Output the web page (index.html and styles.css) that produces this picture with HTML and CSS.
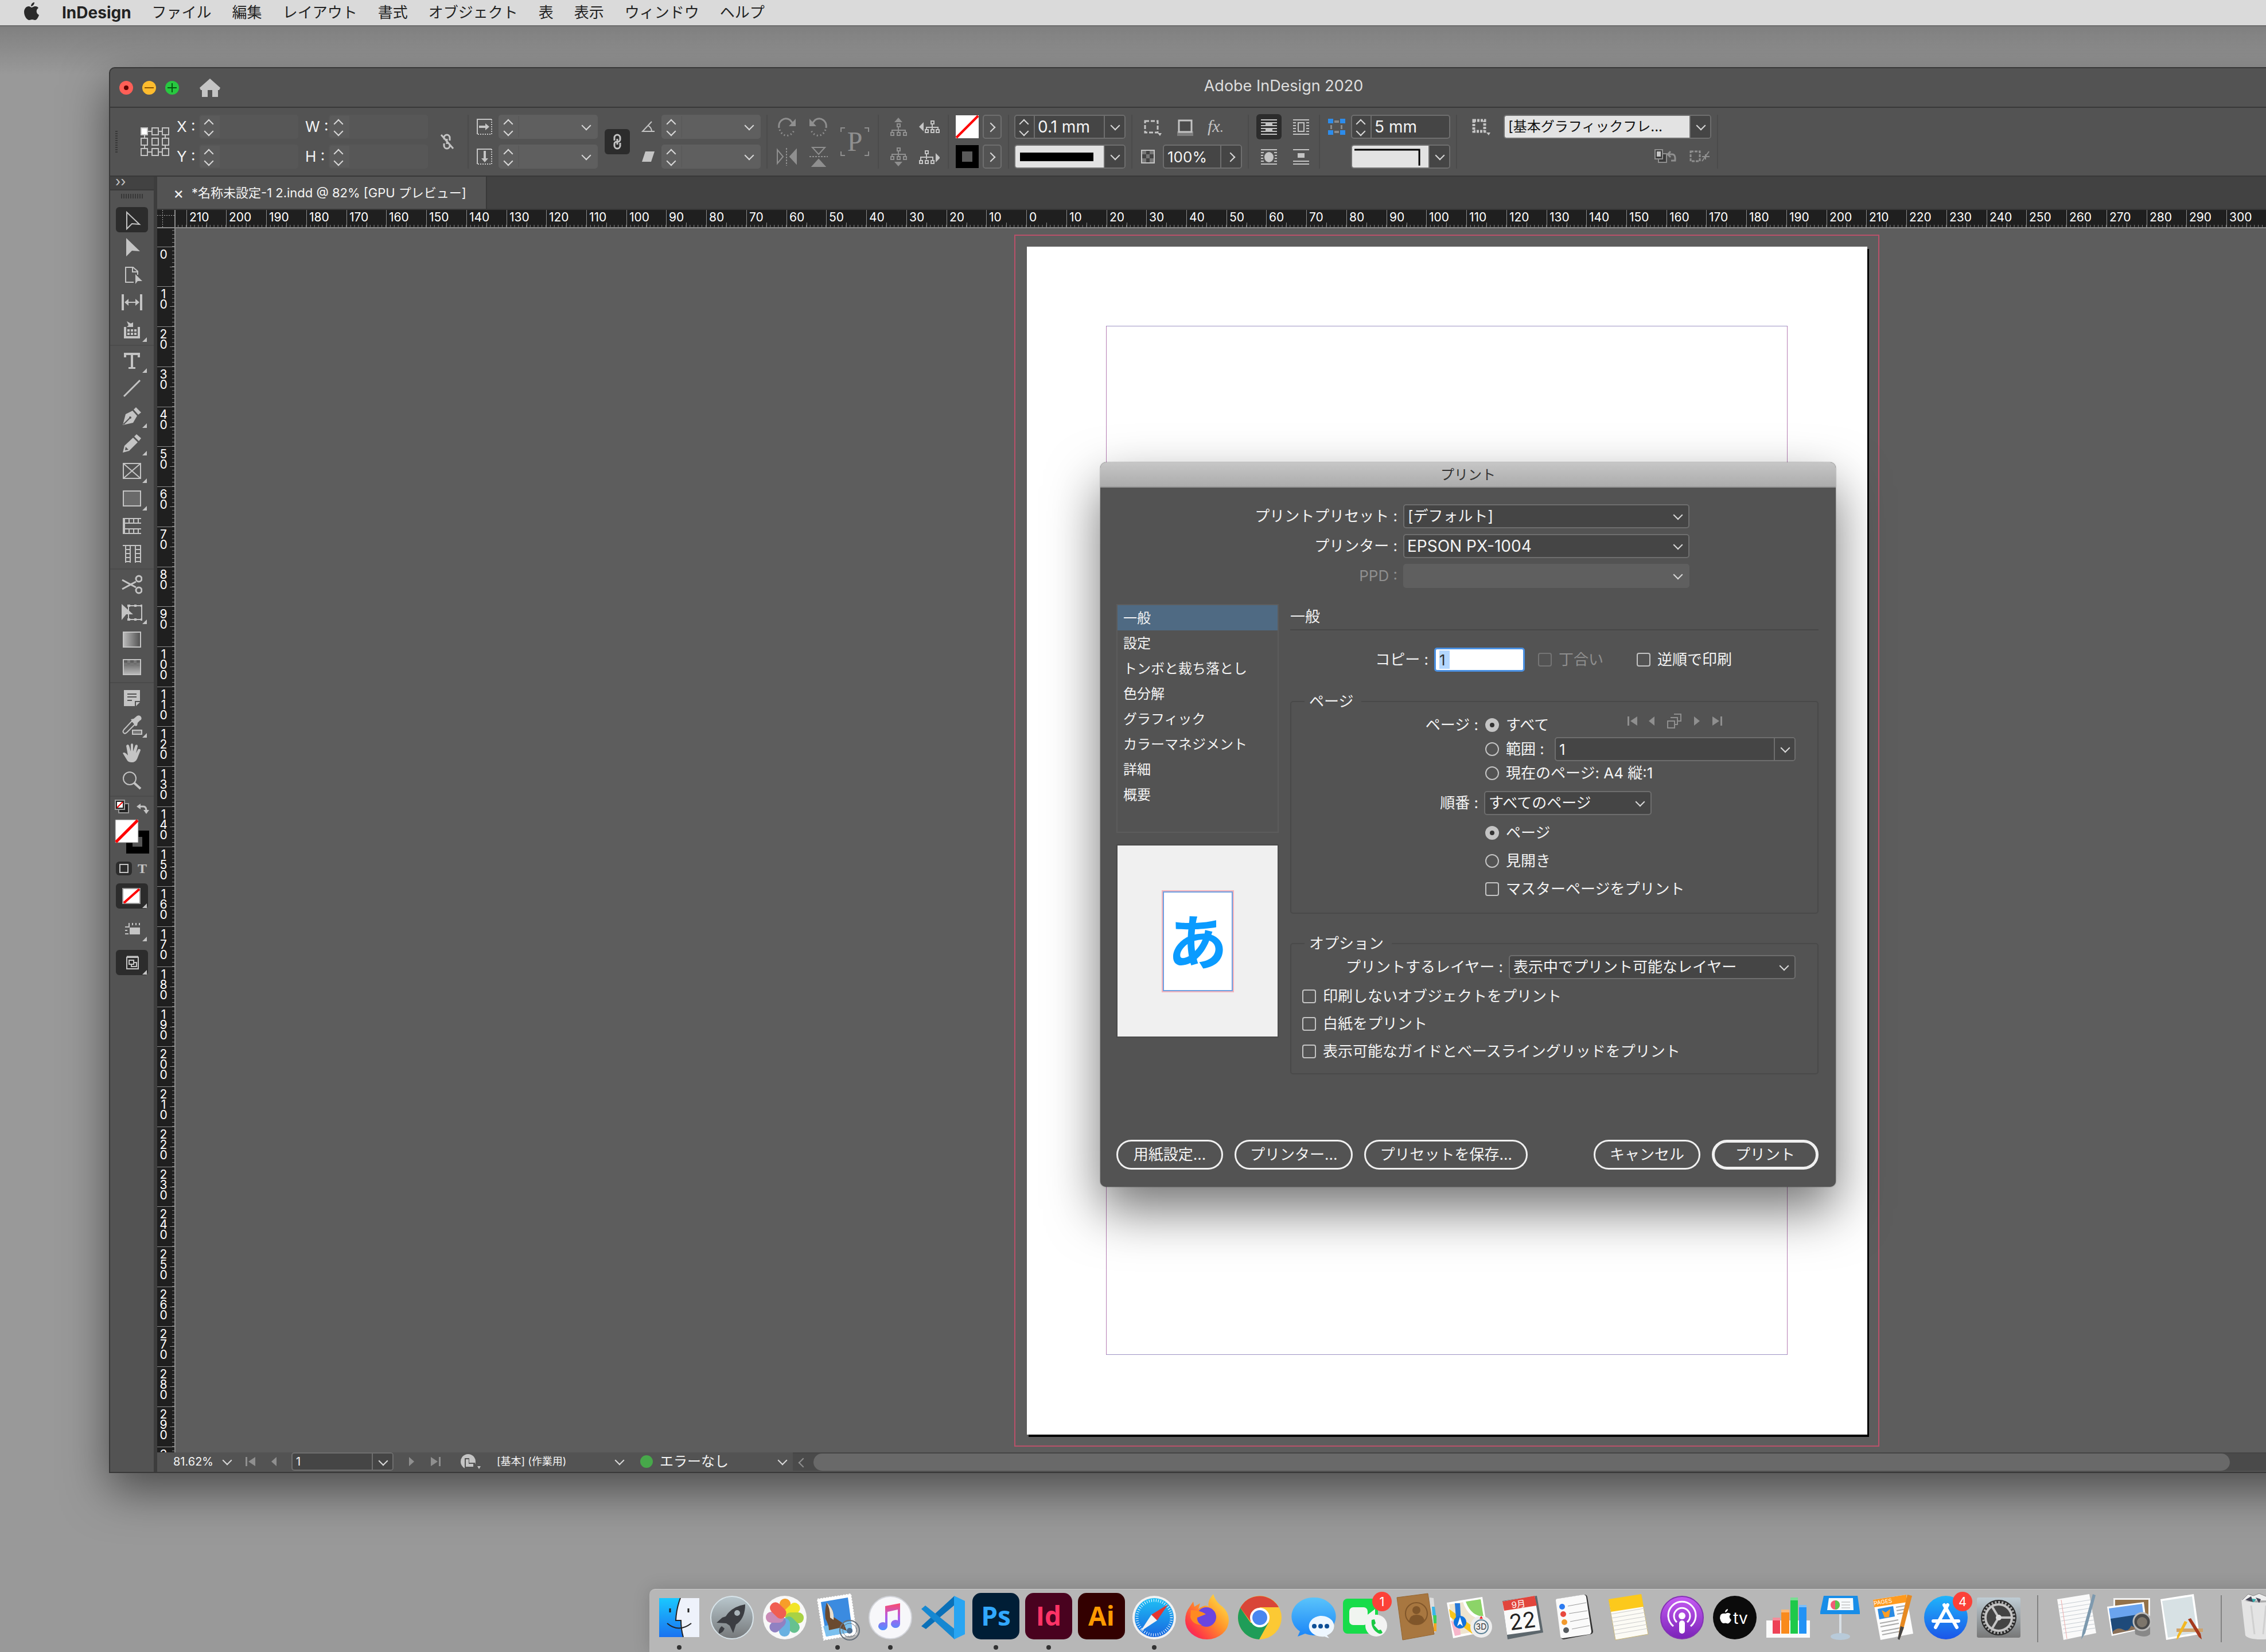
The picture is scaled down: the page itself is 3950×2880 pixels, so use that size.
FILE: index.html
```html
<!DOCTYPE html>
<html lang="ja">
<head>
    <meta charset="UTF-8">
    <meta name="viewport" content="width=device-width, initial-scale=1.0">
    <title>Adobe InDesign 2020</title>
    <link rel="stylesheet" href="styles.css">
</head>
<body>
    <nav class="menubar">
        <svg class="apple" viewBox="0 0 26 32"><path d="M18 0c0 4-3 7-6 7 0-4 3-7 6-7zM13 9c2 0 3-2 7-2 2 0 4 1 5 3-5 3-4 10 1 12-1 4-4 9-7 9-2 0-3-1-5-1s-3 1-5 1C5 31 0 24 0 17 0 11 4 7 8 7c2 0 4 2 5 2z" fill="#2a2a2a"/></svg>
        <a href="#" class="app-name">InDesign</a>
        <a href="#">ファイル</a>
        <a href="#">編集</a>
        <a href="#">レイアウト</a>
        <a href="#">書式</a>
        <a href="#">オブジェクト</a>
        <a href="#">表</a>
        <a href="#">表示</a>
        <a href="#">ウィンドウ</a>
        <a href="#">ヘルプ</a>
    </nav>

    <main class="window">
        <header class="titlebar">
            <div class="lights">
                <svg viewBox="0 0 24 24"><circle cx="12" cy="12" r="12" fill="#ff5f57"/><circle cx="12" cy="12" r="4" fill="#5c0400"/></svg>
                <svg viewBox="0 0 24 24"><circle cx="12" cy="12" r="12" fill="#febc2e"/><path d="M4 12h16" stroke="#8a5300" stroke-width="2"/></svg>
                <svg viewBox="0 0 24 24"><circle cx="12" cy="12" r="12" fill="#28c840"/><path d="M4 12h16M12 4v16" stroke="#04560e" stroke-width="2"/></svg>
            </div>
            <svg class="home" viewBox="0 0 36 32"><path d="M18 0l18 16-2 4h-2v12h-10V20h-8v12H4V20H2l-2-4z" fill="#c4c4c4"/></svg>
            <h1>Adobe InDesign 2020</h1>
        </header>

        <section class="control-bar">
            <span class="grip"></span>
            <svg class="ref-point" viewBox="0 0 50 50" fill="none" stroke="#c4c4c4" stroke-width="2"><path d="M12 7h7M31 7h7M12 43h7M31 43h7M7 14v5M43 14v5M7 31v5M43 31v5"/><rect x="1" y="1" width="11" height="12" fill="#fff"/><rect x="20" y="1" width="11" height="12"/><rect x="38" y="1" width="11" height="12"/><rect x="1" y="19" width="11" height="12"/><rect x="20" y="19" width="11" height="12"/><rect x="38" y="19" width="11" height="12"/><rect x="1" y="37" width="11" height="12"/><rect x="20" y="37" width="11" height="12"/><rect x="38" y="37" width="11" height="12"/></svg>
            <div class="group xy">
                <label for="x">X :</label>
                <span class="field off dim"><i class="spin"></i><input id="x" disabled></span>
                <label for="y">Y :</label>
                <span class="field off dim"><i class="spin"></i><input id="y" disabled></span>
            </div>
            <div class="group wh">
                <label for="w">W :</label>
                <span class="field off dim"><i class="spin"></i><input id="w" disabled></span>
                <label for="h">H :</label>
                <span class="field off dim"><i class="spin"></i><input id="h" disabled></span>
            </div>
            <svg class="unlink" viewBox="0 0 25 28" fill="none" stroke="#c4c4c4" stroke-width="3"><path d="M7 10V7a5 5 0 0 1 10 0v5M7 17v4a5 5 0 0 0 10 0v-3M12 9v9M2 2l21 24"/></svg>
            <span class="sep"></span>
            <div class="group scaling">
                <svg class="i28" viewBox="0 0 28 28" fill="none" stroke="#c4c4c4" stroke-width="2"><path d="M26 1H1v26"/><path d="M26 1v26H1" stroke-dasharray="2 2"/><path d="M4 14h12" stroke-width="4"/><path d="M15 8l7 6-7 6z" fill="#c4c4c4" stroke="none"/></svg>
                <span class="field off"><i class="spin"></i><input aria-label="拡大X" disabled><i class="chev"></i></span>
                <svg class="i28" viewBox="0 0 28 28" fill="none" stroke="#c4c4c4" stroke-width="2"><path d="M26 1H1v26"/><path d="M26 1v26H1" stroke-dasharray="2 2"/><path d="M14 4v14" stroke-width="4"/><path d="M8 17l6 7 6-7z" fill="#c4c4c4" stroke="none"/></svg>
                <span class="field off"><i class="spin"></i><input aria-label="拡大Y" disabled><i class="chev"></i></span>
            </div>
            <button class="link on" aria-label="縦横比を固定"><svg viewBox="0 0 16 28" fill="none" stroke="#c4c4c4" stroke-width="3"><path d="M3 12V7a5 5 0 0 1 10 0v3a4 4 0 0 1-4 4M13 16v5a5 5 0 0 1-10 0v-3a4 4 0 0 1 4-4M8 9v10"/></svg></button>
            <div class="group angle">
                <svg class="i24" viewBox="0 0 24 20" fill="none" stroke="#c4c4c4" stroke-width="2"><path d="M18 1L2 18h21M12 8q6 4 6 10"/></svg>
                <span class="field off"><i class="spin"></i><input aria-label="回転" disabled><i class="chev"></i></span>
                <svg class="i24" viewBox="0 0 24 20"><path d="M7 1h16l-6 18H1z" fill="#c4c4c4"/></svg>
                <span class="field off"><i class="spin"></i><input aria-label="傾斜" disabled><i class="chev"></i></span>
            </div>
            <span class="sep"></span>
            <div class="group flip">
                <svg viewBox="0 0 36 36" fill="none" stroke="#8f8f8f" stroke-width="3"><path d="M5 20C3 8 14 0 24 6l5 6"/><path d="M6 23q5 12 15 10 8-2 11-11" stroke-dasharray="2 4"/><path d="M34 4v13H22z" fill="#8f8f8f" stroke="none"/></svg>
                <svg viewBox="0 0 36 36" fill="none" stroke="#8f8f8f" stroke-width="3"><path d="M31 20C33 8 22 0 12 6l-5 6"/><path d="M30 23q-5 12-15 10-8-2-11-11" stroke-dasharray="2 4"/><path d="M2 4v13h12z" fill="#8f8f8f" stroke="none"/></svg>
                <svg viewBox="0 0 36 36" fill="none" stroke="#8f8f8f" stroke-width="2"><path d="M2 6v24l10-12z"/><path d="M35 6v24L24 18z" fill="#8f8f8f"/><path d="M18 3v31" stroke-dasharray="3 2"/></svg>
                <svg viewBox="0 0 36 36" fill="none" stroke="#8f8f8f" stroke-width="2"><path d="M7 2h22L18 14z"/><path d="M7 35h22L18 23z" fill="#8f8f8f"/><path d="M2 18h32" stroke-dasharray="3 2"/></svg>
            </div>
            <div class="p-mark">P</div>
            <span class="sep"></span>
            <div class="group org">
                <svg viewBox="0 0 36 36" fill="none" stroke="#8f8f8f" stroke-width="2"><path d="M11 10l7-8 7 8z" fill="#8f8f8f" stroke="none"/><rect x="16" y="13" width="5" height="5"/><path d="M18 18v10M7 28v-4h23v4"/><rect x="5" y="28" width="5" height="5"/><rect x="16" y="28" width="5" height="5"/><rect x="27" y="28" width="5" height="5"/></svg>
                <svg viewBox="0 0 36 36" fill="none" stroke="#c4c4c4" stroke-width="2"><path d="M8 10v16l-8-8z" fill="#c4c4c4" stroke="none"/><rect x="21" y="8" width="5" height="5"/><path d="M23 13v10M13 23v-4h20v4"/><rect x="11" y="23" width="5" height="5"/><rect x="21" y="23" width="5" height="5"/><rect x="30" y="23" width="5" height="5"/></svg>
                <svg viewBox="0 0 36 36" fill="none" stroke="#8f8f8f" stroke-width="2"><path d="M11 27l7 8 7-8z" fill="#8f8f8f" stroke="none"/><rect x="16" y="3" width="5" height="5"/><path d="M18 8v10M7 18v-4h23v4"/><rect x="5" y="18" width="5" height="5"/><rect x="16" y="18" width="5" height="5"/><rect x="27" y="18" width="5" height="5"/></svg>
                <svg viewBox="0 0 36 36" fill="none" stroke="#c4c4c4" stroke-width="2"><path d="M29 12v16l8-8z" fill="#c4c4c4" stroke="none"/><rect x="11" y="8" width="5" height="5"/><path d="M13 13v10M3 25v-6h21v6"/><rect x="1" y="25" width="5" height="5"/><rect x="11" y="25" width="5" height="5"/><rect x="21" y="25" width="5" height="5"/></svg>
            </div>
            <span class="sep"></span>
            <div class="group swatches">
                <svg viewBox="0 0 42 42"><path d="M1 1h40v40H1z" fill="#fff"/><path d="M2 40L40 2" stroke="#f00" stroke-width="4"/></svg>
                <button class="more" aria-label="塗り"></button>
                <svg viewBox="0 0 42 42"><path d="M1 1h40v40H1z"/><path d="M12 12h18v18H12z" fill="#5a5a5a"/></svg>
                <button class="more" aria-label="線"></button>
            </div>
            <span class="sep"></span>
            <div class="group stroke">
                <span class="field"><i class="spin"></i><input class="number" aria-label="線幅" value="0.1 mm"><i class="chev boxed"></i></span>
                <span class="field"><span class="paper"><span class="line-sample"></span></span><i class="chev boxed"></i></span>
            </div>
            <span class="sep"></span>
            <div class="effects">
                <div class="row">
                    <svg class="i36" viewBox="0 0 36 36"><path d="M7 8h22v20H7z" fill="none" stroke="#c4c4c4" stroke-width="3" stroke-dasharray="7 3"/><path d="M29 29h7l-3 5z" fill="#c4c4c4"/></svg>
                    <svg class="i36" viewBox="0 0 36 36"><path d="M5 26h28v8H5z" fill="#7d7d7d"/><path d="M8 7h22v20H8z" fill="#4b4b4b" stroke="#c4c4c4" stroke-width="3"/></svg>
                    <span class="fx">fx<small>.</small></span>
                </div>
                <div class="row">
                    <svg class="i24" viewBox="0 0 24 24"><path d="M1 1h22v22H1z" fill="#777" stroke="#c4c4c4" stroke-width="2"/><path d="M2 8h7v7H2zM15 8h7v7h-7zM9 2h6v6H9zM9 15h6v7H9z" fill="#444"/></svg>
                    <span class="field opacity"><input aria-label="不透明度" value="100%"><i class="chev boxed to-right"></i></span>
                </div>
            </div>
            <span class="sep"></span>
            <div class="group wrap">
                <button class="on" aria-label="回り込みなし"><svg viewBox="0 0 28 28" stroke="#c4c4c4" stroke-width="2"><path d="M0 2h28M0 7h28M0 12h28M0 17h28M0 22h28M0 27h28"/><path d="M9 7h10v5H9zM9 17h10v5H9z" fill="#c4c4c4"/></svg></button>
                <button aria-label="境界線で回り込む"><svg viewBox="0 0 28 28" fill="none" stroke="#c4c4c4" stroke-width="2"><path d="M0 2h28M0 27h28M0 7h5M0 12h5M0 17h5M0 22h5M23 7h5M23 12h5M23 17h5M23 22h5M9 7h10v15H9z"/></svg></button>
                <button aria-label="形状で回り込む"><svg viewBox="0 0 28 28" stroke="#c4c4c4" stroke-width="2"><path d="M0 2h28M0 27h28M0 7h5M0 12h4M0 17h4M0 22h5M23 7h5M24 12h4M24 17h4M23 22h5"/><ellipse cx="14" cy="15" rx="7" ry="8" fill="#c4c4c4"/></svg></button>
                <button aria-label="上下に回り込む"><svg viewBox="0 0 28 28" stroke="#c4c4c4" stroke-width="2"><path d="M0 2h28M0 22h28M0 27h28"/><path d="M9 9h10v6H9z" fill="#c4c4c4"/></svg></button>
            </div>
            <span class="sep"></span>
            <div class="group corner">
                <svg class="i30" viewBox="0 0 30 30"><path d="M0 1h9v8H0zM21 1h9v8h-9zM0 21h9v8H0zM21 21h9v8h-9z" fill="#2d8ceb"/><path d="M11 4h8v4h-8zM11 22h8v4h-8zM4 12h3v7H4zM22 12h3v7h-3z" fill="#8a8a8a"/></svg>
                <span class="field"><i class="spin"></i><input class="number" aria-label="角のサイズ" value="5 mm"></span>
                <span></span>
                <span class="field"><span class="paper"><svg viewBox="0 0 134 36"><path d="M4 6h114v28" fill="none" stroke="#000" stroke-width="3"/></svg></span><i class="chev boxed"></i></span>
            </div>
            <span class="sep"></span>
            <div class="object-style">
                <div class="row">
                    <svg class="i32" viewBox="0 0 32 32"><path d="M3 5h19v19H3z" fill="none" stroke="#c4c4c4" stroke-width="5" stroke-dasharray="4 2"/><path d="M25 26h7l-3 5z" fill="#c4c4c4"/></svg>
                    <span class="field style-select"><select aria-label="オブジェクトスタイル"><option>[基本グラフィックフレ...</option></select><i class="chev boxed"></i></span>
                </div>
                <div class="row end">
                    <svg class="i40" viewBox="0 0 40 26"><path d="M8 8h14v15H8z" fill="#3a3a3a" stroke="#8f8f8f" stroke-width="2"/><path d="M2 1h13v16H2z" fill="#3a3a3a" stroke="#8f8f8f" stroke-width="2"/><path d="M5 4h7v9H5z" fill="#c4c4c4"/><path d="M29 4l-5 5 5 5M24 9h8q6 0 5 11h-7" fill="none" stroke="#8f8f8f" stroke-width="3"/></svg>
                    <svg class="i40" viewBox="0 0 40 26" fill="none" stroke="#8f8f8f"><path d="M4 4h16v17H4z" stroke-width="3" stroke-dasharray="5 2"/><path d="M24 21L36 4M24 13h13M30 9v9" stroke-width="2"/></svg>
                </div>
            </div>
            <span class="sep"></span>
        </section>

        <div class="workspace">
            <aside class="tools">
                <div class="tools-head">››</div>
                <div class="tools-grip"></div>
                <div class="tool-group">
                    <button class="on" aria-label="選択ツール"><svg viewBox="0 0 36 36"><path d="M9 5v29l9-9 13 1z" fill="none" stroke="#c4c4c4" stroke-width="2"/></svg></button>
                    <button aria-label="ダイレクト選択ツール"><svg viewBox="0 0 36 36"><path d="M8 2v32l10-10 14 1z"/></svg></button>
                    <button aria-label="ページツール"><svg viewBox="0 0 36 36"><path d="M21 31H7V5h13l8 7v6M19 5v8h9" fill="none" stroke="#c4c4c4" stroke-width="2"/><path d="M24 17v17l4-5h8z"/></svg></button>
                    <button aria-label="間隔ツール"><svg viewBox="0 0 36 36"><path d="M0 4h4v28H0zM32 4h4v28h-4zM5 18l7-6v5h12v-5l7 6-7 6v-5H12v5z"/></svg></button>
                    <button class="sub" aria-label="コンテンツ収集ツール"><svg viewBox="0 0 36 36"><path d="M4 13h4v16h20V13h4v20H4zM10 17h4v4h-4zM16 17h4v4h-4zM22 17h4v4h-4zM10 23h4v4h-4zM16 23h4v4h-4zM22 23h4v4h-4zM9 3l7 4 4-2v8H9l3-3z"/></svg></button>
                </div>
                <div class="tool-group">
                    <button class="sub" aria-label="文字ツール"><svg viewBox="0 0 36 36"><path d="M4 4h28v8h-4V8h-8v21h4v3H12v-3h4V8H8v4H4z"/></svg></button>
                    <button aria-label="線ツール"><svg viewBox="0 0 36 36"><path d="M4 32L32 4" stroke="#c4c4c4" stroke-width="3"/></svg></button>
                    <button class="sub" aria-label="ペンツール"><svg viewBox="0 0 36 36"><path d="M2 34l5-19 12-6 8 9-7 12zM21 7l4-4 9 9-5 4z"/><path d="M3 33l11-11" stroke="#535353" stroke-width="2"/><circle cx="15" cy="21" r="2" fill="#535353"/></svg></button>
                    <button class="sub" aria-label="鉛筆ツール"><svg viewBox="0 0 36 36"><path d="M2 34l3-12L20 8l8 8-15 15zM22 6l4-4 8 7-4 5z"/><path d="M7 24l5 5-6 1z" fill="#535353"/></svg></button>
                    <button class="sub" aria-label="長方形フレームツール"><svg viewBox="0 0 36 36"><path d="M3 5h30v26H3zL33 31M33 5L3 31" fill="none" stroke="#c4c4c4" stroke-width="2"/></svg></button>
                    <button class="sub" aria-label="長方形ツール"><svg viewBox="0 0 36 36"><path d="M3 5h30v26H3z" fill="#6a6a6a" stroke="#c4c4c4" stroke-width="2"/></svg></button>
                    <button aria-label="横組みグリッドツール"><svg viewBox="0 0 36 36" fill="none" stroke="#c4c4c4" stroke-width="2"><path d="M34 5H3v26h31M5 4v28M6 13h28M6 23h28M13 5v8M21 5v8M29 5v8M13 23v8M21 23v8M29 23v8"/></svg></button>
                    <button aria-label="縦組みグリッドツール"><svg viewBox="0 0 36 36" fill="none" stroke="#c4c4c4" stroke-width="2"><path d="M2 4h32M7 4v30M15 4v30M24 4v30M33 4v30M7 11h8M7 18h8M7 25h8M7 32h8M24 11h9M24 18h9M24 25h9M24 32h9"/></svg></button>
                </div>
                <div class="tool-group">
                    <button aria-label="はさみツール"><svg viewBox="0 0 36 36" fill="none" stroke="#c4c4c4" stroke-width="3"><path d="M1 10l24 13M1 26l24-13"/><ellipse cx="30" cy="8" rx="5" ry="5"/><ellipse cx="30" cy="28" rx="5" ry="5"/></svg></button>
                    <button class="sub" aria-label="自由変形ツール"><svg viewBox="0 0 36 36"><path d="M0 4v28l8-10h12z"/><path d="M12 7h23v24H12z" fill="none" stroke="#c4c4c4" stroke-width="2"/><path d="M10 5h5v4h-5zM33 5h3v4h-3zM33 29h3v4h-3zM10 29h5v4h-5zM22 5h4v4h-4zM22 29h4v4h-4z"/></svg></button>
                    <button aria-label="グラデーションツール"><svg viewBox="0 0 36 36"><defs><linearGradient id="gr"><stop offset="0" stop-color="#bbb"/><stop offset="1" stop-color="#505050"/></linearGradient></defs><path d="M3 5h30v26H3z" fill="url(#gr)" stroke="#c4c4c4" stroke-width="2"/></svg></button>
                    <button aria-label="グラデーションぼかしツール"><svg viewBox="0 0 36 36"><defs><linearGradient id="gv" x2="0" y2="1"><stop offset="0" stop-color="#505050"/><stop offset="1" stop-color="#bbb"/></linearGradient></defs><path d="M3 5h30v26H3z" fill="url(#gv)" stroke="#c4c4c4" stroke-width="2"/><path d="M10 6h5v5h-5zM21 6h5v5h-5zM4 11h6v5H4zM15 11h6v5h-6zM26 11h6v5h-6z" fill="#777"/></svg></button>
                </div>
                <div class="tool-group">
                    <button aria-label="注釈ツール"><svg viewBox="0 0 36 36"><path d="M4 4h28v19h-9v9H4zM25 25h7l-7 7z"/><path d="M10 11h16M10 16h16M10 22h8" stroke="#535353" stroke-width="2"/></svg></button>
                    <button class="sub" aria-label="スポイトツール"><svg viewBox="0 0 36 36"><path d="M4 31q-3-2 0-6L18 10l6 5L10 29q-4 4-6 2z" fill="none" stroke="#c4c4c4" stroke-width="2"/><path d="M16 7l5-1 6-5q5-2 7 2t-2 6l-4 4-1 5-3 1z"/><path d="M19 26h16v7H19z" stroke="#c4c4c4" fill="#777" stroke-width="2"/></svg></button>
                    <button aria-label="手のひらツール"><svg viewBox="0 0 36 36"><path d="M2 18q3-3 9 4L8 5q3-4 5 0l3 10V3q2-4 4 0v12l4-11q4-2 4 2l-3 12 4-7q4-1 4 2l-6 15q-3 6-9 6t-8-3z"/></svg></button>
                    <button aria-label="ズームツール"><svg viewBox="0 0 36 36" fill="none" stroke="#c4c4c4"><circle cx="14" cy="14" r="11" stroke-width="2"/><path d="M22 22l11 10" stroke-width="4"/></svg></button>
                </div>
                <div class="swatch-tools">
                    <svg viewBox="0 0 60 98"><path d="M7 7h17v16H7z" fill="#222" stroke="#999" stroke-width="2"/><path d="M1 1h16v16H1z" fill="#222" stroke="#999" stroke-width="2"/><path d="M4 4h10v10H4z" fill="#fff"/><path d="M4 14L14 4" stroke="#f00" stroke-width="2"/><path d="M42 12h8q5 0 5 8" fill="none" stroke="#c4c4c4" stroke-width="3"/><path d="M38 12l7-5v10zM50 18h10l-5 7z"/><path d="M20 54h40v40H20z" fill="#000"/><path d="M31 65h17v17H31z" fill="#555"/><path d="M1 35h40v40H1z" fill="#fff" stroke="#777"/><path d="M2 74L40 36" stroke="#f00" stroke-width="5"/></svg>
                </div>
                <div class="format-row">
                    <button class="on" aria-label="オブジェクトに適用"><svg viewBox="0 0 28 24"><path d="M7 5h14v14H7z" fill="none" stroke="#c4c4c4" stroke-width="2"/></svg></button>
                    <button class="letter">T</button>
                </div>
                <div class="tool-group last">
                    <button class="on sub" aria-label="適用なし"><svg viewBox="0 0 36 36"><path d="M2 5h30v26H2z" fill="#fff" stroke="#999" stroke-width="2"/><path d="M4 30L31 6" stroke="#f00" stroke-width="4"/></svg></button>
                    <button class="sub" aria-label="表示オプション"><svg viewBox="0 0 36 36"><path d="M14 15h18v12H14zM6 13h6V7h2v8H6zM6 19h4v2H6zM6 25h6v2H6zM18 7h2v4h-2zM24 7h2v4h-2zM30 7h2v4h-2z"/></svg></button>
                    <button class="on sub" aria-label="標準モード"><svg viewBox="0 0 36 36" fill="none" stroke="#c4c4c4" stroke-width="2"><path d="M9 9h20v20H9z"/><path d="M9 8h20" stroke-width="3"/><path d="M17 18h9v7h-9z"/><path d="M13 14h8v7h-8z" fill="#2c2c2c"/></svg></button>
                </div>
            </aside>

            <section class="document">
                <div class="tabs"><div class="tab"><button class="close" aria-label="閉じる">×</button>*名称未設定-1 2.indd @ 82% [GPU プレビュー]</div></div>
                <div class="view">
                    <div class="origin"></div>
                    <div class="ruler-h"><div class="scale" id="rulerH"></div></div>
                    <div class="ruler-v"><div class="scale" id="rulerV"></div></div>
                    <div class="canvas">
                        <div class="bleed"></div>
                        <div class="sheet"><div class="margins"></div></div>
                    </div>
                </div>
                <footer class="status">
                    <span class="zoom">81.62%</span><i class="chev"></i>
                    <svg class="nav-first" viewBox="0 0 18 18"><path d="M0 1h3v16H0zM17 1v16L5 9z"/></svg>
                    <svg class="nav-prev" viewBox="0 0 18 18"><path d="M12 1v16L3 9z"/></svg>
                    <span class="field page-no"><input aria-label="ページ番号" value="1"><i class="chev boxed"></i></span>
                    <svg class="nav-next" viewBox="0 0 18 18"><path d="M3 1v16l9-8z"/></svg>
                    <svg class="nav-last" viewBox="0 0 18 18"><path d="M15 1h3v16h-3zM1 1v16l12-8z"/></svg>
                    <svg class="preflight" viewBox="0 0 36 28"><circle cx="14" cy="14" r="13" fill="#c4c4c4"/><path d="M8 28V8h8v8h10v12z" fill="#535353"/><path d="M10 10h5v8h8v5H10z" fill="#c4c4c4"/><path d="M30 22h6l-3 5z" fill="#c4c4c4"/></svg>
                    <span class="profile">[基本] (作業用)</span><i class="chev"></i>
                    <span class="led"></span>
                    <span class="errors">エラーなし</span><i class="chev"></i>
                    <div class="scrollbar"><i class="chev to-left"></i><div class="thumb"></div></div>
                </footer>
            </section>
        </div>
    </main>

    <form class="dialog">
        <header>プリント</header>
        <div class="dialog-body">
            <div class="presets">
                <label for="preset">プリントプリセット :</label>
                <span class="field"><select id="preset"><option>[デフォルト]</option></select><i class="chev"></i></span>
                <label for="printer">プリンター :</label>
                <span class="field"><select id="printer" class="number"><option>EPSON PX-1004</option></select><i class="chev"></i></span>
                <label for="ppd" class="disabled">PPD :</label>
                <span class="field off"><select id="ppd" disabled><option></option></select><i class="chev"></i></span>
            </div>
            <div class="columns">
                <div class="side">
                    <ul class="panels">
                        <li class="current">一般</li>
                        <li>設定</li>
                        <li>トンボと裁ち落とし</li>
                        <li>色分解</li>
                        <li>グラフィック</li>
                        <li>カラーマネジメント</li>
                        <li>詳細</li>
                        <li>概要</li>
                    </ul>
                    <div class="preview"><div class="preview-page">あ</div></div>
                </div>
                <div class="settings">
                    <h2>一般</h2>
                    <div class="line copies">
                        <label class="name" for="copies">コピー :</label>
                        <input id="copies" type="text" value="1">
                        <label class="check disabled"><input type="checkbox" disabled>丁合い</label>
                        <label class="check"><input type="checkbox">逆順で印刷</label>
                    </div>
                    <fieldset class="pages">
                        <legend>ページ</legend>
                        <div class="line">
                            <span class="name">ページ :</span>
                            <label class="check"><input type="radio" name="range" checked>すべて</label>
                            <svg class="page-nav" viewBox="0 0 166 28"><path d="M0 6h3v16H0zM17 6v16L5 14zM47 6v16l-10-8zM116 6v16l10-8zM148 6v16l12-8zM162 6h3v16h-3z" fill="#8f8f8f"/><path d="M70 14h12v12H70zM75 8h12v12h-5M81 2h12v12h-6" fill="none" stroke="#8f8f8f" stroke-width="2"/></svg>
                        </div>
                        <div class="line">
                            <span class="name"></span>
                            <label class="check"><input type="radio" name="range">範囲 :</label>
                            <span class="field range"><input aria-label="範囲" value="1"><i class="chev boxed"></i></span>
                        </div>
                        <div class="line">
                            <span class="name"></span>
                            <label class="check"><input type="radio" name="range">現在のページ: A4 縦:1</label>
                        </div>
                        <div class="line spaced">
                            <label class="name" for="order">順番 :</label>
                            <span class="field order"><select id="order"><option>すべてのページ</option></select><i class="chev"></i></span>
                        </div>
                        <div class="line spaced">
                            <span class="name"></span>
                            <label class="check"><input type="radio" name="spread" checked>ページ</label>
                        </div>
                        <div class="line near">
                            <span class="name"></span>
                            <label class="check"><input type="radio" name="spread">見開き</label>
                        </div>
                        <div class="line near">
                            <span class="name"></span>
                            <label class="check"><input type="checkbox">マスターページをプリント</label>
                        </div>
                    </fieldset>
                    <fieldset class="options">
                        <legend>オプション</legend>
                        <div class="line">
                            <label class="name" for="layers">プリントするレイヤー :</label>
                            <span class="field layers"><select id="layers"><option>表示中でプリント可能なレイヤー</option></select><i class="chev"></i></span>
                        </div>
                        <label class="check"><input type="checkbox">印刷しないオブジェクトをプリント</label>
                        <label class="check"><input type="checkbox">白紙をプリント</label>
                        <label class="check"><input type="checkbox">表示可能なガイドとベースライングリッドをプリント</label>
                    </fieldset>
                </div>
            </div>
            <div class="buttons">
                <button type="button">用紙設定...</button>
                <button type="button">プリンター...</button>
                <button type="button">プリセットを保存...</button>
                <button type="button" class="cancel">キャンセル</button>
                <button type="button" class="default">プリント</button>
            </div>
        </div>
    </form>

    <footer class="dock">
        <!-- Finder -->
        <a href="#" class="running" aria-label="Finder"><svg viewBox="0 0 92 92"><defs><linearGradient id="fb" x2="0" y2="1"><stop offset="0" stop-color="#1ac8ff"/><stop offset="1" stop-color="#1a72f0"/></linearGradient></defs><path d="M11 13h70v68H11z" fill="#eef2fb"/><path d="M11 13h37q-7 18-8 39h9q0 15 4 29H11z" fill="url(#fb)"/><path d="M30 31v7M62 31v7" stroke="#222" stroke-width="3"/><path d="M25 57q20 17 42 0M48 13q-7 18-8 39h9q0 15 4 29" fill="none" stroke="#222" stroke-width="2"/></svg></a>
        <!-- Launchpad -->
        <a href="#" aria-label="Launchpad"><svg viewBox="0 0 92 92"><defs><linearGradient id="lp" x2="0" y2="1"><stop offset="0" stop-color="#b9c7cd"/><stop offset="1" stop-color="#75787a"/></linearGradient></defs><circle cx="46" cy="47" r="37" fill="url(#lp)" stroke="#d8e4ea" stroke-width="2"/><path d="M69 24q0 22-13 33l-3 2-5 15-6-13-6-4-17-1 10-9 6-2q10-17 34-21zM28 62l5 4q-3 8-10 9-1-8 5-13z" fill="#3b3d42"/><circle cx="55" cy="39" r="5" fill="#aab4b9"/></svg></a>
        <!-- Photos -->
        <a href="#" aria-label="写真"><svg viewBox="0 0 92 92"><circle cx="46" cy="47" r="38" fill="#f8f8f8"/><g opacity=".95"><rect x="37" y="14" width="19" height="32" rx="9" fill="#f79a1e"/><rect x="37" y="14" width="19" height="32" rx="9" fill="#f2e51d" transform="rotate(45 46 47)"/><rect x="37" y="14" width="19" height="32" rx="9" fill="#a5d13b" transform="rotate(90 46 47)"/><rect x="37" y="14" width="19" height="32" rx="9" fill="#5fbf8a" transform="rotate(135 46 47)"/><rect x="37" y="14" width="19" height="32" rx="9" fill="#62aee0" transform="rotate(180 46 47)"/><rect x="37" y="14" width="19" height="32" rx="9" fill="#8b7bc0" transform="rotate(225 46 47)"/><rect x="37" y="14" width="19" height="32" rx="9" fill="#c886b4" transform="rotate(270 46 47)"/><rect x="37" y="14" width="19" height="32" rx="9" fill="#f0564a" transform="rotate(315 46 47)"/></g></svg></a>
        <!-- Mail -->
        <a href="#" class="running" aria-label="メール"><svg viewBox="0 0 92 92"><path d="M11 15L69 6l10 70-57 10z" fill="#fff" stroke="#fff" stroke-width="2" stroke-dasharray="3 2"/><path d="M17 20l47-8 8 60-46 8z" fill="#3b8be0"/><path d="M21 62l48-9 3 19-46 8z" fill="#7bc0ee"/><path d="M27 21q12 9 12 25l18 12 5 12-13-5-18 4q0-9-6-20-2-14 2-28z" fill="#6a4a30"/><path d="M27 21q6 9 6 26l6 4q2-18-12-30z" fill="#e9dfcf"/><circle cx="67" cy="69" r="17" fill="none" stroke="#66707a" stroke-width="2"/><circle cx="67" cy="69" r="12" fill="none" stroke="#66707a"/><circle cx="67" cy="70" r="5" fill="#4d6c8c"/></svg></a>
        <!-- Music -->
        <a href="#" class="running" aria-label="ミュージック"><svg viewBox="0 0 92 92"><defs><linearGradient id="mu" x2="0" y2="1"><stop offset="0" stop-color="#fb4b6a"/><stop offset=".5" stop-color="#b45be8"/><stop offset="1" stop-color="#4a90ff"/></linearGradient></defs><circle cx="46" cy="47" r="37" fill="#f7f7fa" stroke="#d2d4da" stroke-width="2"/><path d="M37 27l26-5v36a8 7 0 1 1-4-6V33l-18 4v25a8 7 0 1 1-4-6z" fill="url(#mu)"/></svg></a>
        <!-- VS Code -->
        <a href="#" aria-label="Visual Studio Code"><svg viewBox="0 0 92 92"><path d="M8 62l8 5 50-42V9z" fill="#0a70b8"/><path d="M8 32l7-6 51 41v18z" fill="#1588d2"/><path d="M65 9l19 9v58l-19 9z" fill="#28a5f2"/></svg></a>
        <a href="#" class="running" aria-label="Photoshop"><svg viewBox="0 0 92 92"><rect x="5" y="4" width="82" height="81" rx="15" fill="#001e36"/><text x="46" y="61" class="adobe" fill="#31a8ff">Ps</text></svg></a>
        <a href="#" class="running" aria-label="InDesign"><svg viewBox="0 0 92 92"><rect x="5" y="4" width="82" height="81" rx="15" fill="#49021f"/><text x="46" y="61" class="adobe" fill="#ff3366">Id</text></svg></a>
        <a href="#" aria-label="Illustrator"><svg viewBox="0 0 92 92"><rect x="5" y="4" width="82" height="81" rx="15" fill="#330000"/><text x="46" y="61" class="adobe" fill="#ff9a00">Ai</text></svg></a>
        <!-- Safari -->
        <a href="#" class="running" aria-label="Safari"><svg viewBox="0 0 92 92"><defs><linearGradient id="sa" x2="0" y2="1"><stop offset="0" stop-color="#1fc0f5"/><stop offset="1" stop-color="#1767e0"/></linearGradient></defs><circle cx="46" cy="47" r="38" fill="#f2f2f2"/><circle cx="46" cy="47" r="34" fill="url(#sa)"/><circle cx="46" cy="47" r="30" fill="none" stroke="#fff" stroke-width="5" stroke-dasharray="1 3"/><path d="M70 24L41 42l10 10z" fill="#e5352f"/><path d="M22 71l19-29 10 10z" fill="#f3f3f3"/></svg></a>
        <!-- Firefox -->
        <a href="#" aria-label="Firefox"><svg viewBox="0 0 92 92"><defs><linearGradient id="ff" x1="1" x2="0" y2="1"><stop offset="0" stop-color="#fff44f"/><stop offset=".45" stop-color="#ff9329"/><stop offset=".8" stop-color="#ff3647"/><stop offset="1" stop-color="#e6178c"/></linearGradient></defs><path d="M16 28l6-9 2 9 10-6-3 10q12-9 18-4Q46 18 57 6q4 14 16 22 11 10 11 24a38 33 0 0 1-76 0q0-14 8-24z" fill="url(#ff)"/><circle cx="45" cy="46" r="17" fill="#6a45e0"/><path d="M18 34q16 0 26 7-10 4-15 6-1 9 8 13-17-1-20-14z" fill="#ff8a20"/></svg></a>
        <!-- Chrome -->
        <a href="#" aria-label="Chrome"><svg viewBox="0 0 92 92"><circle cx="46" cy="47" r="38" fill="#fcc934"/><path d="M12 30a38 38 0 0 1 67-1H46L30 54z" fill="#d94538"/><path d="M12 30a38 38 0 0 0 33 55l16-29-31 0z" fill="#1f9d58"/><circle cx="46" cy="47" r="17" fill="#fff"/><circle cx="46" cy="47" r="13" fill="#4a86f0"/></svg></a>
        <!-- Messages -->
        <a href="#" aria-label="メッセージ"><svg viewBox="0 0 92 92"><defs><linearGradient id="ms" x2="0" y2="1"><stop offset="0" stop-color="#5ac4fb"/><stop offset="1" stop-color="#1a85f8"/></linearGradient></defs><path d="M46 12a38 33 0 1 1-13 63l-13 5 4-9A38 33 0 0 1 46 12z" fill="url(#ms)"/><path d="M59 44a23 18 0 0 1 12 34l4 5-8-3a23 18 0 1 1-8-36z" fill="#eef7ff"/><circle cx="49" cy="62" r="4" fill="#0d4f96"/><circle cx="60" cy="62" r="4" fill="#0d4f96"/><circle cx="71" cy="62" r="4" fill="#0d4f96"/></svg></a>
        <!-- FaceTime -->
        <a href="#" aria-label="FaceTime"><svg viewBox="0 0 92 92"><rect x="7" y="14" width="61" height="61" rx="8" fill="#17dc4a"/><rect x="18" y="29" width="32" height="31" rx="7" fill="#f0f5f0"/><path d="M50 42l13-10v24l-13-6z" fill="#f0f5f0"/><circle cx="65" cy="61" r="19" fill="#f3f3f3"/><path d="M57 51l5-1 2 7-3 3 8 9 4-1 3 5q-3 4-8 1-13-8-11-23z" fill="#19c944"/></svg><b class="badge">1</b></a>
        <!-- Contacts -->
        <a href="#" aria-label="連絡先"><svg viewBox="0 0 92 92"><path d="M66 12l7 1 5 57-8 7z" fill="#ddd"/><path d="M70 28h5l2 15h-6z" fill="#39b5e8"/><path d="M72 43h6v14h-5z" fill="#3ccf5a"/><path d="M73 57h5v14h-5z" fill="#f5a623"/><path d="M9 12L63 5l11 71-55 10z" fill="#a87740" stroke="#966630"/><circle cx="43" cy="40" r="19" fill="none" stroke="#80562a" stroke-width="2"/><circle cx="43" cy="34" r="7" fill="#80562a"/><path d="M30 53q2-11 13-11t14 9q-5 8-14 8-9 0-13-6z" fill="#80562a"/></svg></a>
        <!-- Maps -->
        <a href="#" aria-label="マップ"><svg viewBox="0 0 92 92"><path d="M4 21l62-10 9 60-60 12z" fill="#fff"/><path d="M8 24l55-9 8 53-53 10z" fill="#efe5cf"/><path d="M32 20l31-5 5 31q-20 0-36-26z" fill="#8cd468"/><path d="M8 32l54 40-14 3L10 46z" fill="#f8c51c"/><path d="M18 22h9l2 38h-8z" fill="#2779d8"/><path d="M11 52l16 9 1 16-10 2z" fill="#f7b6cb"/><path d="M34 18q9 28 34 30" fill="none" stroke="#fff" stroke-width="5"/><circle cx="27" cy="55" r="11" fill="#1173dd"/><path d="M27 46l5 16-5-4-5 4z" fill="#fff"/><circle cx="64" cy="63" r="19" fill="#eee"/><circle cx="64" cy="63" r="12" fill="none" stroke="#5a8096" stroke-width="2"/><path d="M64 44l3 5h-6z" fill="#e22"/><text x="64" y="68" class="tiny" fill="#333">3D</text></svg></a>
        <!-- Calendar -->
        <a href="#" aria-label="カレンダー"><svg viewBox="0 0 92 92"><path d="M9 18l60-9 11 64-62 12z" fill="#5d676d"/><path d="M9 19l56-10 10 60-58 8z" fill="#fafafa"/><path d="M9 19l56-10 4 17-57 9z" fill="#e2453c"/><g transform="rotate(-8 46 46)"><text x="40" y="28" class="month" fill="#fff">9月</text><text x="43" y="66" class="day" fill="#222">22</text></g></svg></a>
        <!-- Reminders -->
        <a href="#" aria-label="リマインダー"><svg viewBox="0 0 92 92"><path d="M12 17q0-3 4-3l44-7q4 0 5 4l10 60q0 4-4 5l-47 9q-4 0-5-4z" fill="#333"/><path d="M10 17q0-3 4-3l44-7q4 0 5 4l9 60q0 4-3 5l-47 7q-4 0-4-4z" fill="#fafafa"/><g stroke="#999"><path d="M31 27l32-6M33 40l32-5M35 54l32-6M38 67l31-6"/></g><circle cx="21" cy="28" r="5" fill="#2c7bf0"/><circle cx="23" cy="41" r="5" fill="#e8473d"/><circle cx="25" cy="55" r="5" fill="#f29a2e"/><circle cx="28" cy="69" r="5" fill="#555a5e"/></svg></a>
        <!-- Notes -->
        <a href="#" aria-label="メモ"><svg viewBox="0 0 92 92"><path d="M10 16l57-9 12 69-57 10z" fill="#fcfbf5" stroke="#c9b676"/><path d="M10 15l57-9 4 22-57 9z" fill="#fcc91c"/><path d="M14 41l58-10M15 48l58-10M16 55l59-10M17 62l59-10M19 69l58-10M20 76l58-10" stroke="#ccc"/></svg></a>
        <!-- Podcasts -->
        <a href="#" aria-label="Podcast"><svg viewBox="0 0 92 92"><defs><linearGradient id="pc" x2="0" y2="1"><stop offset="0" stop-color="#c65cf3"/><stop offset="1" stop-color="#7a23b8"/></linearGradient></defs><circle cx="46" cy="47" r="37" fill="url(#pc)" stroke="#8432b4" stroke-width="2"/><path d="M31 62a24 24 0 1 1 30 0M37 55a14 14 0 1 1 18 0" fill="none" stroke="#fff" stroke-width="3"/><circle cx="46" cy="44" r="6" fill="#fff"/><rect x="41" y="52" width="10" height="23" rx="5" fill="#fff"/></svg></a>
        <!-- TV -->
        <a href="#" aria-label="TV"><svg viewBox="0 0 92 92"><circle cx="46" cy="47" r="38" fill="#0b0b0b"/><path d="M34 32q0 4-5 6 0-5 5-6zM30 40q5-3 9 1-5 5 1 10-4 8-8 6-3-1-5 0-5 0-7-9 0-10 10-8z" fill="#fff"/><text x="56" y="58" class="tv" fill="#fff">tv</text></svg></a>
        <!-- Numbers -->
        <a href="#" aria-label="Numbers"><svg viewBox="0 0 92 92"><path d="M9 52h76v30H9z" fill="#fafafa"/><path d="M20 47h13v28H20z" fill="#ee4257"/><path d="M35 33h14v42H35z" fill="#f98a1c"/><path d="M51 12h13v63H51z" fill="#1ec94a"/><path d="M66 25h13v50H66z" fill="#2292f5"/><path d="M20 47h13v5H20zM35 33h14v5H35zM51 12h13v5H51zM66 25h13v4H66z" fill="#fff" opacity=".4"/></svg></a>
        <!-- Keynote -->
        <a href="#" aria-label="Keynote"><svg viewBox="0 0 92 92"><path d="M44 40h4v40h-4z" fill="#d8dfe5"/><ellipse cx="46" cy="80" rx="17" ry="6" fill="#b8cad9"/><path d="M17 9h59l4 28v4H11v-4z" fill="#188de8"/><path d="M26 13h42l1 21H23z" fill="#f6fafc"/><circle cx="37" cy="25" r="8" fill="#f25c76"/><path d="M37 25V17a8 8 0 0 1 0 16z" fill="#5bc74f"/><path d="M48 20h15M48 25h15M48 30h15" stroke="#aaa"/></svg></a>
        <!-- Pages -->
        <a href="#" aria-label="Pages"><svg viewBox="0 0 92 92"><path d="M11 16l58-9 12 68-57 11z" fill="#fcfcfc"/><path d="M11 16l58-9 2 13-58 9z" fill="#ff9a1d"/><path d="M19 32l27-5 3 18-27 5z" fill="#2a8ae2"/><path d="M26 34l7 4 8-6-2 14-8 1z" fill="#ff9d23"/><path d="M51 29l18-3M52 35l17-3M53 41l16-3M23 57l32-6M24 63l32-6M26 71l32-6M27 77l31-6" stroke="#aaa" stroke-width="2"/><path d="M71 7l8 2-14 54-7 20-3-2 3-20z" fill="#e78a22"/><path d="M59 62l6 2-8 22-3-2z" fill="#444"/><g transform="rotate(-9 30 24)"><text x="29" y="23" class="micro" fill="#fff">PAGES</text></g></svg></a>
        <!-- App Store -->
        <a href="#" aria-label="App Store"><svg viewBox="0 0 92 92"><defs><linearGradient id="as" x2="0" y2="1"><stop offset="0" stop-color="#1fb5fb"/><stop offset="1" stop-color="#1b55e8"/></linearGradient></defs><circle cx="46" cy="47" r="38" fill="url(#as)"/><path d="M24 53h44M49 25L28 64M43 25l22 39" stroke="#fff" stroke-width="6" stroke-linecap="round"/></svg><b class="badge">4</b></a>
        <!-- System Preferences -->
        <a href="#" aria-label="システム環境設定"><svg viewBox="0 0 92 92"><defs><linearGradient id="sp" x2="0" y2="1"><stop offset="0" stop-color="#bfcdd5"/><stop offset="1" stop-color="#777"/></linearGradient></defs><rect x="8" y="12" width="76" height="70" rx="3" fill="url(#sp)"/><circle cx="46" cy="47" r="31" fill="#292929"/><circle cx="46" cy="47" r="27" fill="none" stroke="#aaa" stroke-width="4" stroke-dasharray="3 3"/><circle cx="46" cy="47" r="23" fill="#444" stroke="#c5c5c5" stroke-width="4"/><path d="M46 47h24M46 47L34 27M46 47L34 67" stroke="#c5c5c5" stroke-width="4"/><circle cx="46" cy="47" r="5" fill="#ddd"/></svg></a>
        <span class="divider"></span>
        <!-- TextEdit -->
        <a href="#" aria-label="テキストエディット"><svg viewBox="0 0 92 92"><path d="M12 15l56-9 12 68-57 12z" fill="#fafafa"/><path d="M14 25l56-9M15 32l56-9M17 39l56-9M18 46l56-9M19 53l56-9M21 60l56-9M22 67l56-9M23 74l56-9" stroke="#c6ccd2"/><path d="M19 16l10 68" stroke="#eaa"/><path d="M74 6l5 2-18 66-7 11 2-13z" fill="#7d99ae"/></svg></a>
        <!-- Preview -->
        <a href="#" aria-label="プレビュー"><svg viewBox="0 0 92 92"><path d="M18 13h64v48H18z" fill="#f2f2f2"/><path d="M21 16h58v42H21z" fill="#93724a"/><path d="M7 28l64-8 6 45-62 14z" fill="#fff"/><path d="M10 31l58-8 5 39-56 13z" fill="#6aa4ee"/><path d="M13 49l58-9 2 22-56 13z" fill="#1e4a7a"/><path d="M17 71q9-8 18-3t14-7l11 6-43 9z" fill="#8a7058"/><path d="M54 54h28v22q-8 8-26 0z" fill="#888"/><circle cx="68" cy="54" r="15" fill="#4a4a4a" stroke="#bbb" stroke-width="3"/><circle cx="68" cy="55" r="9" fill="#7c756b"/></svg></a>
        <!-- Documents -->
        <a href="#" aria-label="書類"><svg viewBox="0 0 92 92"><path d="M8 15l58-9 10 70-58 10z" fill="#fff"/><path d="M11 18l52-8 9 63-51 9z" fill="#d7e1e4"/><path d="M36 66h46v6H36z" fill="#cfa36c"/><path d="M50 53l5 2-15 27-4 4 1-7z" fill="#f2b822"/><path d="M56 50l5-2 17 27 2 10-5-4z" fill="#a63a1e"/></svg></a>
        <span class="divider"></span>
        <!-- Trash -->
        <a href="#" aria-label="ゴミ箱"><svg viewBox="0 0 92 92"><path d="M13 18l12-12 9 3 10-4 12 5 14-4 10 12z" fill="#eee" stroke="#888"/><path d="M20 16l10-6 4 10zM38 12l9 3-3 7z" fill="#445"/><path d="M31 14l8 1-5 6z" fill="#3aa"/><path d="M13 16q33 10 68 0l-8 62q-4 7-26 7t-27-7z" fill="#e4e4e4"/><path d="M30 26l6 50M56 26l-5 50" stroke="#d0d0d0" stroke-width="3"/></svg></a>
    </footer>

    <script>
        // pixels per 10 mm at 81.62% zoom
        const step = 69.73;

        function buildRuler(id, from, to, side) {
            const ruler = document.getElementById(id);
            const count = (to - from) / 10;
            for (let i = 0; i <= count; i++) {
                const mark = document.createElement("span");
                // the first mark is scrolled under the corner, so it has no number
                mark.textContent = i === 0 ? "" : Math.abs(from + i * 10);
                mark.style[side] = Math.round((i + 1) * step) - Math.round(i * step) + "px";
                ruler.appendChild(mark);
            }
        }

        buildRuler("rulerH", -220, 300, "width");
        buildRuler("rulerV", -10, 300, "height");
    </script>
</body>
</html>
```
FILE: styles.css
```css
* {
    box-sizing: border-box;
}
body {
    margin: 0;
    height: 100vh;
    display: flex;
    flex-direction: column;
    overflow: hidden;
    position: relative;
    background: linear-gradient(#808080 46px, #999 130px);
    font-family: Inter, "Noto Sans CJK JP", sans-serif;
    font-size: 26px;
    line-height: 32px;
    color: #f4f4f4;
}
a {
    color: inherit;
    text-decoration: none;
}
input, select, button {
    font: inherit;
    color: inherit;
    margin: 0;
    padding: 0;
    border: none;
    background: none;
    border-radius: 0;
    appearance: none;
}
svg {
    display: block;
    flex: none;
}

/* menu bar */
.menubar {
    flex: none;
    display: flex;
    align-items: center;
    gap: 36px;
    height: 46px;
    padding-left: 42px;
    background: #dadada;
    border-bottom: 2px solid #6c6c6c;
    color: #222;
    white-space: nowrap;
    position: relative;
    z-index: 1;
}
.apple {
    width: 26px;
    height: 32px;
    margin-bottom: 4px;
}
.app-name {
    font-weight: bold;
    font-size: 28px;
    margin-left: 4px;
}

/* window */
.window {
    flex: 1;
    min-height: 0;
    display: flex;
    flex-direction: column;
    margin: 71px -335px 202px 190px;
    background: #535353;
    border: 2px solid #383838;
    border-radius: 10px 10px 0 0;
    box-shadow: 0 30px 80px rgba(0, 0, 0, 0.5);
}
.titlebar {
    flex: none;
    display: flex;
    align-items: center;
    height: 69px;
    padding-left: 16px;
    border-bottom: 2px solid #383838;
    position: relative;
}
.lights {
    display: flex;
    gap: 16px;
}
.lights svg {
    width: 24px;
    height: 24px;
}
.home {
    width: 36px;
    height: 32px;
    margin-left: 36px;
}
.titlebar h1 {
    position: absolute;
    left: 0;
    right: 0;
    margin: 0 0 6px;
    text-align: center;
    font-size: 27px;
    font-weight: normal;
    color: #dedede;
}

/* control bar */
.control-bar {
    flex: none;
    display: flex;
    align-items: center;
    height: 120px;
    padding: 12px 0;
    border-bottom: 2px solid #383838;
}
.control-bar > * {
    flex: none;
}
.grip {
    width: 4px;
    height: 38px;
    margin-left: 9px;
    background: repeating-linear-gradient(#383838 0 2px, #535353 2px 4px);
}
.ref-point {
    width: 50px;
    height: 50px;
    margin-left: 40px;
}
.group {
    display: grid;
    grid-template-rows: 42px 42px;
    row-gap: 10px;
    align-items: center;
}
.xy {
    grid-template-columns: 39px 173px;
    margin-left: 13px;
}
.wh {
    grid-template-columns: 41px 173px;
    margin-left: 12px;
}
.unlink {
    width: 25px;
    height: 28px;
    margin: 0 23px 0 21px;
}
.sep {
    width: 2px;
    height: 94px;
    background: #4b4b4b;
}
.scaling {
    grid-template-columns: 38px 173px;
    margin-left: 14px;
}
.link {
    width: 44px;
    height: 44px;
    margin-left: 12px;
    display: flex;
    align-items: center;
    justify-content: center;
}
.link svg {
    width: 16px;
    height: 28px;
}
.on {
    background: #2c2c2c;
    border-radius: 6px;
}
.angle {
    grid-template-columns: 35px 173px;
    margin: 0 10px 0 20px;
}
.flip {
    grid-template-columns: 36px 36px;
    column-gap: 20px;
    margin-left: 15px;
}
.p-mark {
    width: 50px;
    height: 50px;
    margin: 0 15px 0 20px;
    text-align: center;
    font-family: "Liberation Serif", serif;
    font-size: 48px;
    line-height: 50px;
    color: #8f8f8f;
    background:
        linear-gradient(#8f8f8f, #8f8f8f) 0 0 / 8px 2px,
        linear-gradient(#8f8f8f, #8f8f8f) 0 0 / 2px 8px,
        linear-gradient(#8f8f8f, #8f8f8f) 100% 0 / 8px 2px,
        linear-gradient(#8f8f8f, #8f8f8f) 100% 0 / 2px 8px,
        linear-gradient(#8f8f8f, #8f8f8f) 0 100% / 8px 2px,
        linear-gradient(#8f8f8f, #8f8f8f) 0 100% / 2px 8px,
        linear-gradient(#8f8f8f, #8f8f8f) 100% 100% / 8px 2px,
        linear-gradient(#8f8f8f, #8f8f8f) 100% 100% / 2px 8px;
    background-repeat: no-repeat;
}
.org {
    grid-template-columns: 36px 36px;
    column-gap: 18px;
    margin: 0 14px 0 16px;
}
.swatches {
    grid-template-columns: 42px 33px;
    column-gap: 6px;
    margin: 0 11px;
}
.stroke {
    grid-template-columns: 194px;
    margin: 0 10px 0 9px;
}
.effects {
    width: 176px;
    margin: 0 10px 0 15px;
}
.row {
    display: flex;
    align-items: center;
    justify-content: space-between;
    height: 42px;
}
.row + .row {
    margin-top: 10px;
}
.effects .row:first-child {
    justify-content: flex-start;
    gap: 22px;
}
.opacity {
    width: 138px;
}
.fx {
    font-family: "Liberation Serif", serif;
    font-style: italic;
    font-size: 30px;
    color: #c4c4c4;
}
.wrap {
    grid-template-columns: 44px 44px;
    column-gap: 12px;
    margin: 0 9px 0 13px;
}
.wrap button {
    height: 44px;
    display: flex;
    align-items: center;
    justify-content: center;
}
.wrap svg {
    width: 28px;
    height: 28px;
}
.corner {
    grid-template-columns: 40px 173px;
    margin: 0 10px 0 14px;
}
.object-style {
    width: 417px;
    margin: 0 10px 0 26px;
}
.object-style .end {
    justify-content: flex-end;
    gap: 20px;
}
.style-select {
    width: 362px;
}
.style-select select {
    background: #e3e3e3;
    color: #111;
    padding-left: 14px;
    font-size: 24px;
}
.i24 {
    width: 24px;
}
.i28 {
    width: 28px;
}
.i30 {
    width: 30px;
}
.i32 {
    width: 32px;
}
.i36 {
    width: 36px;
}
.i40 {
    width: 40px;
}

/* fields */
.field {
    display: flex;
    height: 42px;
    background: #454545;
    border: 2px solid #6e6e6e;
    border-radius: 5px;
    position: relative;
    overflow: hidden;
}
.field input, .field select {
    flex: 1;
    min-width: 0;
    height: 38px;
    padding-left: 6px;
}
.field .number {
    font-size: 28px;
    padding-left: 5px;
}
.field.off {
    background: #5f5f5f;
    border-color: #5f5f5f;
}
.field.off.dim {
    background: #575757;
    border-color: #575757;
}
.spin {
    width: 34px;
    flex: none;
    border-right: 2px solid #6e6e6e;
    position: relative;
}
.off .spin {
    border-color: #5b5b5b;
}
.dim .spin {
    background: #5b5b5b;
}
.spin::before, .spin::after, .chev::after, .more::after {
    content: "";
    position: absolute;
    left: 9px;
    top: 8px;
    width: 10px;
    height: 10px;
    border: solid #d8d8d8;
    border-width: 2px 0 0 2px;
    transform: rotate(45deg);
}
.spin::after {
    top: 21px;
    border-width: 0 2px 2px 0;
}
.chev {
    flex: none;
    width: 36px;
    position: relative;
}
.chev::after {
    left: 12px;
    top: 50%;
    margin-top: -8px;
    border-width: 0 2px 2px 0;
}
.chev.boxed {
    background: #454545;
    border-left: 2px solid #6e6e6e;
}
.chev.to-right::after, .more::after {
    left: 10px;
    margin-top: -5px;
    border-width: 2px 2px 0 0;
}
.chev.to-left::after {
    margin-top: -5px;
    border-width: 0 0 2px 2px;
    border-color: #8f8f8f;
}
.more {
    height: 42px;
    border: 2px solid #6e6e6e;
    border-radius: 5px;
    position: relative;
}
.more::after {
    top: 50%;
    left: 6px;
}
.paper {
    flex: 1;
    display: flex;
    align-items: center;
    background: #e3e3e3;
}
.line-sample {
    width: 128px;
    height: 15px;
    margin-left: 8px;
    background: #000;
}

/* tools */
.workspace {
    flex: 1;
    min-height: 0;
    display: flex;
}
.tools {
    flex: none;
    width: 82px;
    border-right: 6px solid #3d3d3d;
}
.tools-head {
    height: 24px;
    padding-left: 9px;
    background: #424242;
    border-bottom: 2px solid #383838;
    font-size: 24px;
    line-height: 18px;
    color: #c4c4c4;
}
.tools-grip {
    width: 38px;
    height: 8px;
    margin: 6px auto 15px;
    background: repeating-linear-gradient(to right, #383838 0 2px, #535353 2px 4px);
}
.tool-group {
    display: flex;
    flex-direction: column;
    align-items: center;
    gap: 4px;
    padding-bottom: 4px;
    margin-bottom: 4px;
    border-bottom: 2px solid #4b4b4b;
}
.tool-group button {
    width: 56px;
    height: 44px;
    display: flex;
    align-items: center;
    justify-content: center;
    position: relative;
}
.tool-group svg {
    width: 36px;
    height: 36px;
}
.tools svg {
    fill: #c4c4c4;
}
.tools svg[fill="none"] {
    fill: none;
}
.tool-group .sub::after {
    content: "";
    position: absolute;
    right: 2px;
    bottom: 1px;
    border-left: 8px solid transparent;
    border-bottom: 8px solid #c4c4c4;
}
.swatch-tools svg {
    width: 60px;
    height: 98px;
    margin: 5px 0 0 8px;
}
.format-row {
    display: flex;
    gap: 8px;
    padding: 10px 10px 14px;
}
.format-row button {
    width: 28px;
    height: 24px;
}
.format-row .letter {
    width: 20px;
    font-family: "Liberation Serif", serif;
    font-weight: bold;
    font-size: 24px;
    line-height: 24px;
    color: #c4c4c4;
}
.tool-group.last {
    gap: 14px;
    border: none;
}

/* document */
.document {
    flex: 1;
    min-width: 0;
    display: flex;
    flex-direction: column;
}
.tabs {
    flex: none;
    display: flex;
    height: 58px;
    background: #424242;
    border-bottom: 2px solid #383838;
}
.tab {
    display: flex;
    align-items: center;
    padding: 0 34px 1px 28px;
    background: #535353;
    font-size: 22px;
    white-space: pre;
    border-right: 2px solid #383838;
}
.close {
    width: 16px;
    margin-right: 16px;
    font-size: 28px;
}
.view {
    flex: 1;
    min-height: 0;
    display: grid;
    grid-template-columns: 32px 1fr;
    grid-template-rows: 32px 1fr;
    background: #1f1f1f;
    font-size: 21px;
    color: #fff;
}
.origin {
    border: solid #8a8a8a;
    border-width: 0 2px 2px 0;
    background:
        repeating-linear-gradient(#aaa 0 2px, transparent 2px 4px) 9px 0 / 1px 100% no-repeat,
        repeating-linear-gradient(to right, #aaa 0 2px, transparent 2px 4px) 0 9px / 100% 1px no-repeat;
}
.ruler-h {
    overflow: hidden;
    border-bottom: 2px solid #8a8a8a;
}
.ruler-h .scale {
    display: flex;
    margin-left: -51px;
}
.ruler-h span {
    flex: none;
    height: 30px;
    padding-left: 4px;
    line-height: 25px;
    border-left: 1px solid #8a8a8a;
    background:
        linear-gradient(to right, #8a8a8a 1px, transparent 1px) -1px 100% / 10% 4px repeat-x,
        linear-gradient(#8a8a8a, #8a8a8a) 50% 100% / 1px 8px no-repeat;
}
.ruler-v {
    min-height: 0;
    overflow: hidden;
    border-right: 2px solid #8a8a8a;
}
.ruler-v .scale {
    margin-top: -38px;
}
.ruler-v span {
    display: block;
    width: 30px;
    padding: 4px 12px 0 4px;
    line-height: 18px;
    text-align: center;
    word-break: break-all;
    border-top: 1px solid #8a8a8a;
    background:
        linear-gradient(#8a8a8a 1px, transparent 1px) 100% -1px / 4px 10% repeat-y,
        linear-gradient(#8a8a8a, #8a8a8a) 100% 50% / 8px 1px no-repeat;
}
.canvas {
    position: relative;
    overflow: hidden;
    background: #5d5d5d;
}
.bleed {
    position: absolute;
    left: 1462px;
    top: 11px;
    width: 1508px;
    height: 2113px;
    border: 2px solid #b9516a;
}
.sheet {
    position: absolute;
    left: 1484px;
    top: 32px;
    width: 1465px;
    height: 2071px;
    padding: 138px 139px 139px 138px;
    background: #fff;
    box-shadow: 3px 4px 0 #000;
}
.margins {
    height: 100%;
    border: 1px solid;
    border-color: #9d93c4 #b77fb5;
}

/* status bar */
.status {
    flex: none;
    display: flex;
    align-items: center;
    height: 34px;
    padding: 0 0 2px 28px;
    font-size: 20px;
    white-space: nowrap;
}
.status > * {
    flex: none;
}
.status > svg {
    width: 18px;
    height: 18px;
    fill: #8f8f8f;
}
.status .chev {
    height: 30px;
}
.zoom {
    width: 76px;
}
.nav-first {
    margin: 0 24px 0 14px;
}
.page-no {
    width: 178px;
    height: 32px;
    margin: 0 24px 0 20px;
}
.page-no input {
    height: 28px;
}
.nav-last {
    margin: 0 34px 0 22px;
}
.status > .preflight {
    width: 36px;
    height: 28px;
    margin-right: 28px;
}
.profile {
    width: 196px;
    font-size: 18px;
}
.led {
    width: 22px;
    height: 22px;
    border-radius: 50%;
    background: #47a84a;
    margin: 0 12px 0 18px;
}
.errors {
    width: 196px;
    font-size: 24px;
}
.status .scrollbar {
    flex: 1;
    display: flex;
    height: 32px;
    padding-right: 396px;
    background: #4a4a4a;
    border-top: 2px solid #454545;
}
.thumb {
    flex: 1;
    background: #696969;
    border-radius: 15px;
}

/* print dialog */
.dialog {
    position: absolute;
    left: 1918px;
    top: 806px;
    width: 1282px;
    background: #535353;
    border-radius: 10px;
    box-shadow: 0 0 2px rgba(0, 0, 0, 0.6), 0 40px 90px rgba(0, 0, 0, 0.55);
}
.dialog header {
    height: 44px;
    line-height: 44px;
    text-align: center;
    color: #333;
    font-size: 24px;
    background: linear-gradient(#c6c6c6, #acacac);
    border-bottom: 2px solid #999;
    border-radius: 10px 10px 0 0;
}
.dialog-body {
    padding: 29px 30px 30px 28px;
}
.presets {
    display: grid;
    grid-template-columns: 490px 499px;
    gap: 10px;
    align-items: center;
    text-align: right;
    margin-bottom: 28px;
}
.disabled {
    color: #8f8f8f;
}
.columns {
    display: flex;
    gap: 20px;
}
.side {
    width: 283px;
    flex: none;
}
.panels {
    list-style: none;
    margin: 0 0 20px;
    padding: 0;
    height: 399px;
    border: 2px solid #5c5c5c;
    font-size: 24px;
}
.panels li {
    height: 44px;
    padding-left: 10px;
    line-height: 45px;
}
.panels .current {
    background: #4f6a83;
}
.preview {
    height: 337px;
    display: flex;
    align-items: center;
    justify-content: center;
    background: #f0f0f0;
    border: 2px solid #4a4a4a;
}
.preview-page {
    width: 122px;
    height: 174px;
    line-height: 162px;
    text-align: center;
    background: #fff;
    border: 2px solid #6f9fe0;
    outline: 2px solid #f5b5bd;
    font-family: "Noto Sans CJK JP", sans-serif;
    font-weight: 700;
    font-size: 104px;
    color: #0a9bff;
}
.settings {
    flex: 1;
}
.settings h2 {
    margin: 0;
    height: 46px;
    line-height: 44px;
    font-size: 26px;
    font-weight: normal;
    border-bottom: 2px solid #474747;
}
.line {
    display: flex;
    align-items: center;
    height: 42px;
}
.name {
    flex: none;
    width: 326px;
    margin-right: 10px;
    text-align: right;
}
.copies {
    margin-top: 30px;
}
.copies .name {
    width: 241px;
}
#copies {
    width: 158px;
    height: 42px;
    margin-right: 21px;
    padding-left: 6px;
    color: #333;
    border: 3px solid #4a90e2;
    border-radius: 5px;
    background: #fff linear-gradient(#b3d7ff, #b3d7ff) 6px center / 18px 32px no-repeat;
}
.copies .check + .check {
    margin-left: 56px;
}
.check {
    display: flex;
    align-items: center;
    gap: 12px;
}
.check input {
    flex: none;
    width: 24px;
    height: 24px;
    border: 2px solid #c4c4c4;
    border-radius: 4px;
}
.line .check input {
    margin-left: 2px;
}
.check input:disabled {
    border-color: #757575;
}
.check input[type="radio"] {
    border-radius: 50%;
}
.check input[type="radio"]:checked {
    border-width: 8px;
    background: #333;
}
fieldset {
    margin: 36px 0 0;
    padding: 4px 0 20px;
    border: 2px solid #494949;
    border-radius: 5px;
    min-width: 0;
}
legend {
    margin-left: 23px;
    padding: 0 14px 0 8px;
}
.spaced {
    margin-top: 10px;
}
.near {
    margin-top: 7px;
}
.page-nav {
    width: 166px;
    height: 28px;
    align-self: flex-start;
    margin: 0 165px 0 auto;
}
.range {
    width: 420px;
    margin: 0 38px 0 auto;
}
.order {
    width: 292px;
}
.options {
    padding-bottom: 14px;
}
.options .name {
    width: 369px;
}
.options .line {
    margin-bottom: 6px;
}
.layers {
    width: 500px;
}
.options > .check {
    height: 48px;
    padding-left: 19px;
}
.buttons {
    display: flex;
    gap: 20px;
    margin-top: 114px;
}
.buttons button {
    height: 52px;
    padding: 0 24px;
    min-width: 186px;
    border: 3px solid #f0f0f0;
    border-radius: 26px;
}
.buttons .cancel {
    margin-left: auto;
}
.buttons .default {
    border-width: 5px;
}

/* dock */
.dock {
    flex: none;
    display: flex;
    height: 110px;
    margin: 0 -60px 0 1132px;
    padding: 2px 6px 0;
    background: #b7b7b7;
    border-top: 1px solid #c8c8c8;
    border-radius: 10px 0 0 0;
    box-shadow: 0 0 30px rgba(0, 0, 0, 0.15);
}
.dock a {
    flex: none;
    width: 92px;
    position: relative;
}
.dock svg {
    width: 92px;
    height: 92px;
}
.running::after {
    content: "";
    position: absolute;
    left: 42px;
    bottom: 4px;
    width: 8px;
    height: 8px;
    border-radius: 50%;
    background: #333;
}
.badge {
    position: absolute;
    right: 0;
    top: 2px;
    width: 34px;
    height: 34px;
    border-radius: 50%;
    background: #fc4138;
    color: #fff;
    font-size: 22px;
    font-weight: normal;
    line-height: 34px;
    text-align: center;
}
.divider {
    flex: none;
    width: 2px;
    height: 82px;
    margin: 8px 21px 0;
    background: #828282;
}
.adobe, .tiny, .month, .day, .tv, .micro {
    text-anchor: middle;
}
.adobe {
    font: bold 46px "Open Sans", sans-serif;
}
.tiny {
    font-size: 14px;
}
.month {
    font-size: 15px;
}
.day {
    font-size: 38px;
}
.tv {
    font-size: 28px;
}
.micro {
    font-size: 10px;
}
```
